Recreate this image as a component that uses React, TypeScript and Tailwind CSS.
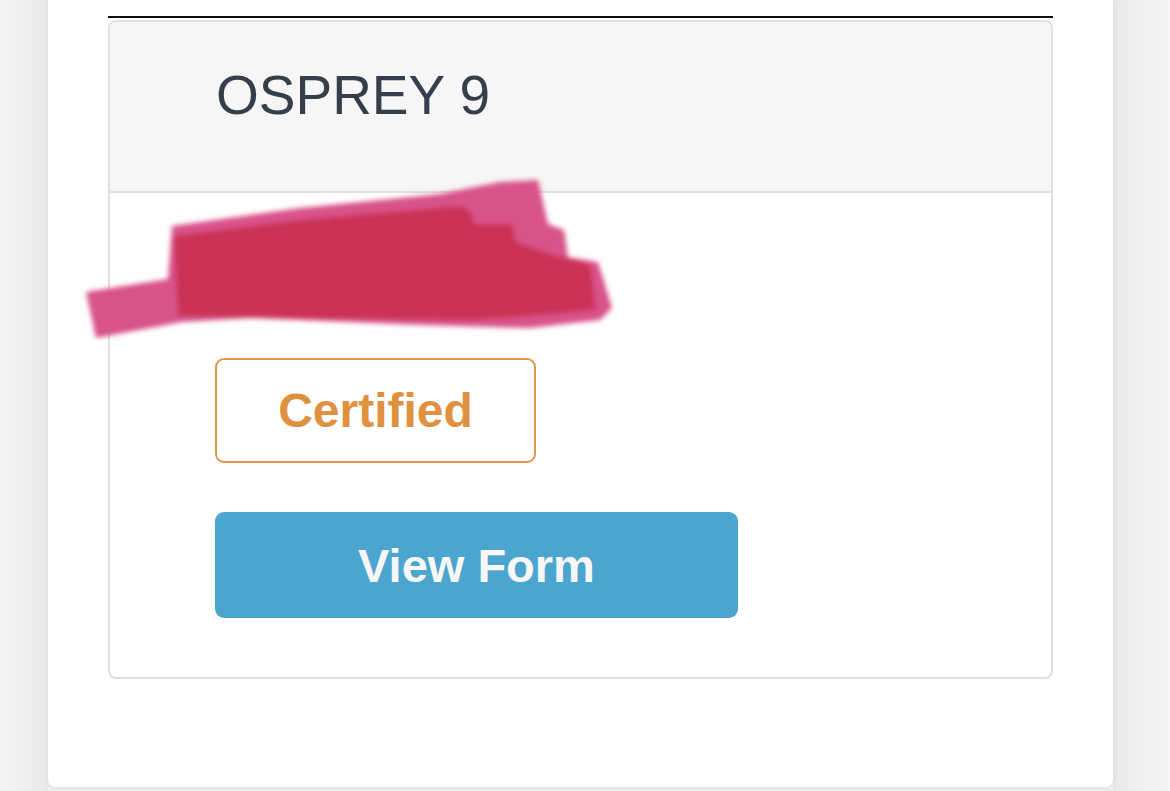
import React from "react";

export default function App() {
  return (
    <div className="relative h-[791px] w-[1170px] overflow-hidden bg-[#f2f2f2]" style={{ fontFamily: '"Liberation Sans", Arial, sans-serif' }}>
      <div className="absolute left-0 top-0 h-full w-[48px] bg-gradient-to-r from-[#f6f6f6] to-[#e9e9e9]" />
      <div className="absolute right-0 top-0 h-full w-[57px] bg-gradient-to-l from-[#f6f6f6] to-[#e9e9e9]" />
      <div className="relative ml-[48px] h-[787px] w-[1065px] rounded-b-[8px] bg-white px-[60px] pt-[16px] shadow-[0_2px_6px_rgba(0,0,0,0.08)]">
        <div className="h-[2px] w-full bg-[#111]" />
        <div className="mt-[2px] flex h-[659px] flex-col overflow-hidden rounded-[8px] border-2 border-[#e0e0e0]">
          <div className="flex h-[171px] items-center border-b-2 border-[#e0e0e0] bg-[#f6f6f6] pl-[106px] pb-[22px]">
            <span className="text-[55px] leading-none text-[#343f4b]">OSPREY 9</span>
          </div>
          <div className="flex flex-col pl-[105px] pt-[165px]">
            <div className="flex h-[105px] w-[321px] items-center justify-center rounded-[9px] border-2 border-[#e0954a]">
              <span className="text-[48px] font-bold leading-none text-[#e0913f]">Certified</span>
            </div>
            <button className="mt-[49px] flex h-[106px] w-[523px] items-center justify-center rounded-[9px] bg-[#4ba5cf]">
              <span className="text-[47px] font-bold leading-none text-[#f7f7f7]">View Form</span>
            </button>
          </div>
        </div>
      </div>
      <svg className="absolute left-0 top-0" width="1170" height="791" viewBox="0 0 1170 791">
        <defs>
          <filter id="blur" x="-10%" y="-10%" width="120%" height="120%">
            <feGaussianBlur stdDeviation="2.5" />
          </filter>
        </defs>
        <g filter="url(#blur)">
          <path
            d="M86 292 L168 279 L172 226 L300 208 L440 194 L500 182 L538 180 L548 224 L564 230 L568 257 L598 262 L612 308 L600 320 L530 328 L420 325 L250 318 L182 322 L96 338 Z"
            fill="#d8528a"
          />
          <path
            d="M174 236 L300 220 L462 206 L472 214 L474 224 L512 224 L516 242 L556 256 L590 264 L596 310 L530 316 L470 320 L300 318 L178 316 Z"
            fill="#cb3355"
          />
        </g>
      </svg>
    </div>
  );
}
